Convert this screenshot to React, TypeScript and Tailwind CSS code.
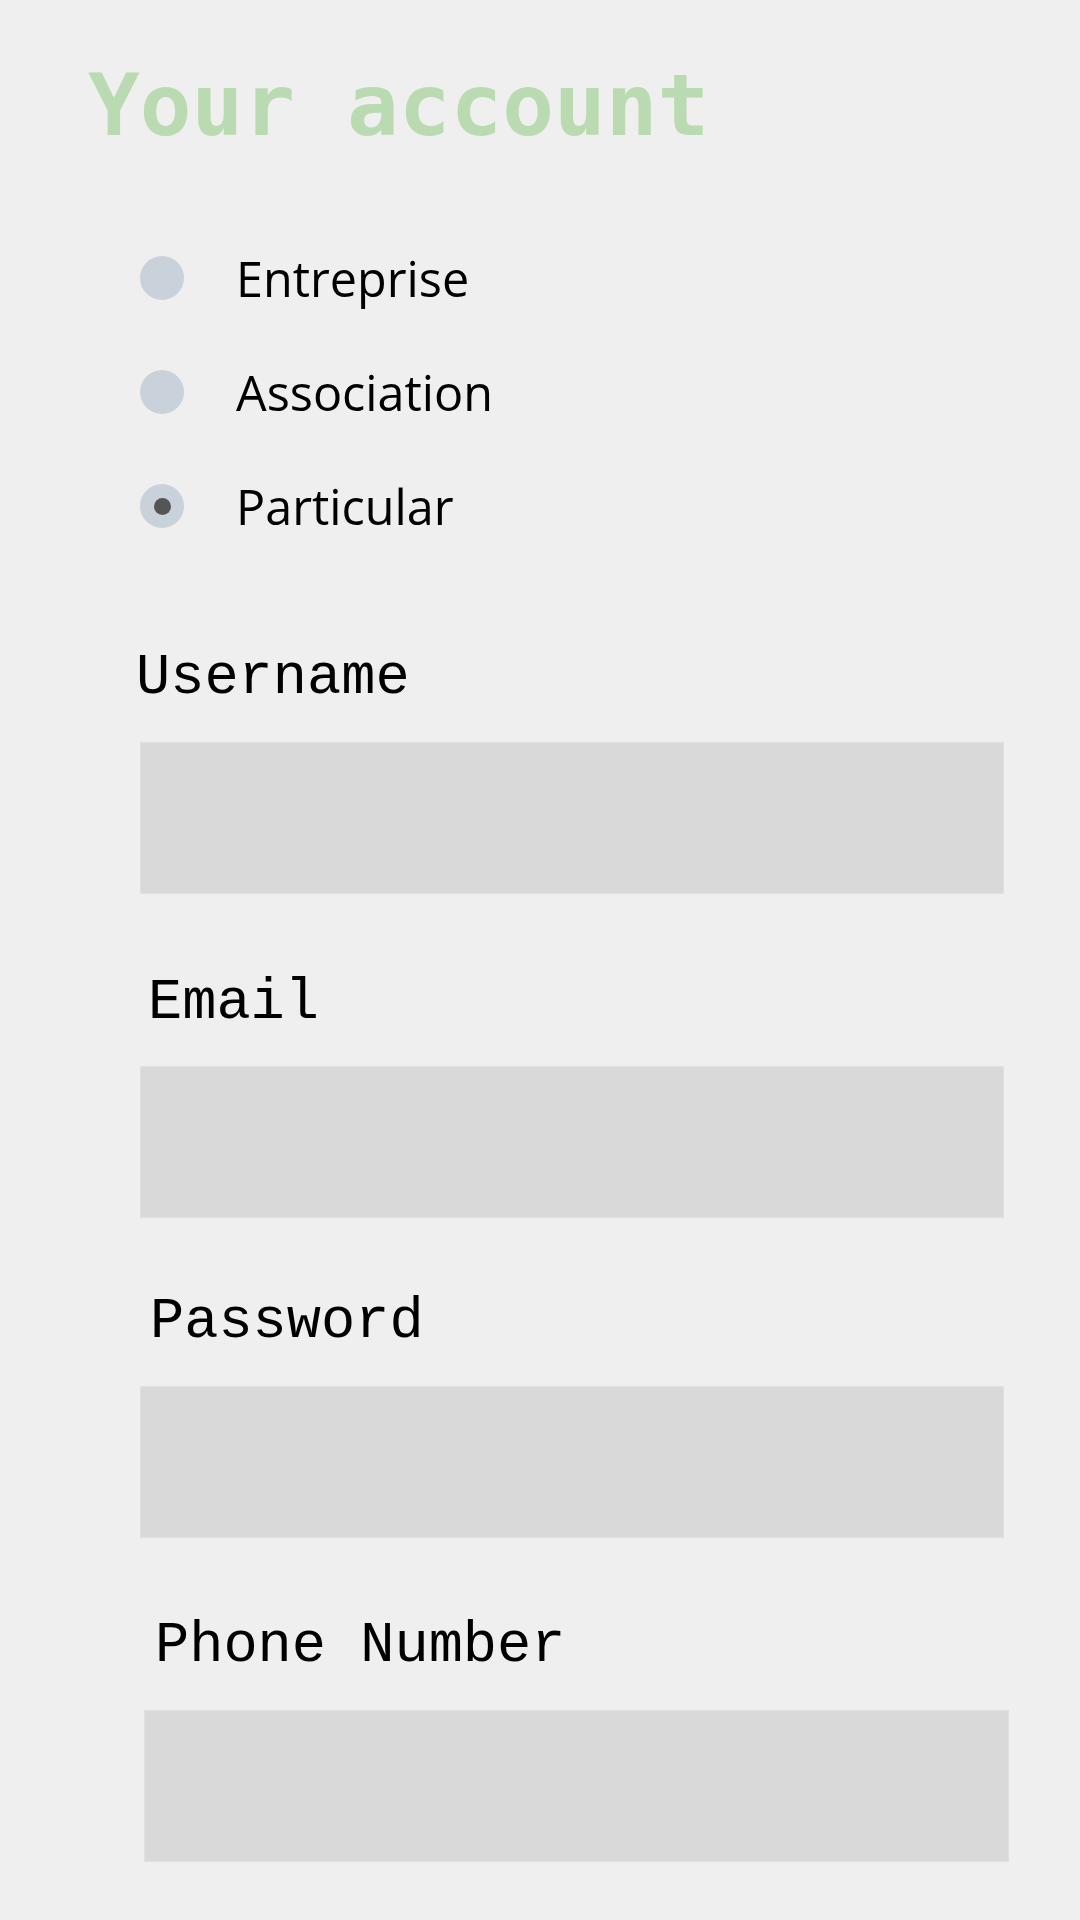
import React from "react";

const mono = { fontFamily: '"Liberation Mono", "DejaVu Sans Mono", monospace' };
const titleFont = { fontFamily: '"DejaVu Sans Mono", "Liberation Mono", monospace' };

function Radio({ label, checked }: { label: string; checked?: boolean }) {
  return (
    <div className="flex h-[114px] items-center">
      <div className="flex h-[44px] w-[44px] items-center justify-center rounded-full bg-[#c9d1db]">
        {checked && <div className="h-[17px] w-[17px] rounded-full bg-[#555555]" />}
      </div>
      <span className="ml-[52px] font-['Open_Sans',sans-serif] text-[48.5px] leading-none text-black">
        {label}
      </span>
    </div>
  );
}

export default function App() {
  return (
    <div className="min-h-[1920px] w-[1080px] bg-[#efefef] pt-[62px]">
      <div className="h-[86px] pl-[88px] text-[86px] font-bold leading-none text-[#badbb1]" style={titleFont}>
        Your account
      </div>
      <div className="mt-[73px] pl-[140px]">
        <Radio label="Entreprise" />
        <Radio label="Association" />
        <Radio label="Particular" checked />
      </div>
      <div className="pb-[58px]">
        <div className="mt-[87px]">
          <div className="ml-[136px] text-[57px] leading-none text-black" style={mono}>Username</div>
          <div className="ml-[140px] mt-[35px] h-[152px] w-[864px] bg-[#d9d9d9] border border-[#e0e0e0]" />
        </div>
        <div className="mt-[81px]">
          <div className="ml-[148px] text-[57px] leading-none text-black" style={mono}>Email</div>
          <div className="ml-[140px] mt-[34px] h-[152px] w-[864px] bg-[#d9d9d9] border border-[#e0e0e0]" />
        </div>
        <div className="mt-[76px]">
          <div className="ml-[150px] text-[57px] leading-none text-black" style={mono}>Password</div>
          <div className="ml-[140px] mt-[35px] h-[152px] w-[864px] bg-[#d9d9d9] border border-[#e0e0e0]" />
        </div>
        <div className="mt-[80px]">
          <div className="ml-[155px] text-[57px] leading-none text-black" style={mono}>Phone Number</div>
          <div className="ml-[144px] mt-[35px] h-[152px] w-[865px] bg-[#d9d9d9] border border-[#e0e0e0]" />
        </div>
      </div>
    </div>
  );
}
